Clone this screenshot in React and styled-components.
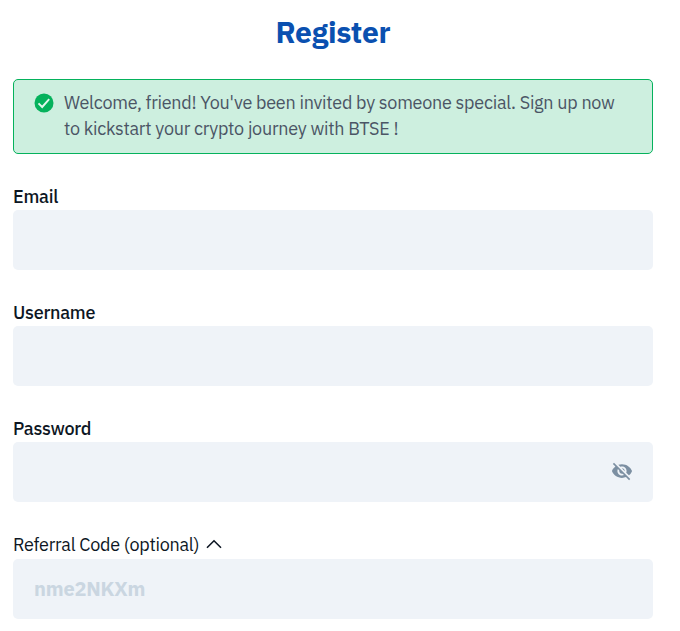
import React, { useState } from "react";
import styled, { createGlobalStyle } from "styled-components";
import { MdVisibilityOff, MdVisibility } from "react-icons/md";

const GlobalStyle = createGlobalStyle`
  * {
    box-sizing: border-box;
  }
  body {
    margin: 0;
    background-color: #fff;
    color: #0d1623;
    font-family: "IBM Plex Sans", Roboto, "Liberation Sans", sans-serif;
    font-size: 18px;
    line-height: 26px;
    letter-spacing: -0.265px;
  }
`;

const Page = styled.main`
  width: 680px;
  height: 631px;
  padding: 12px 27px 0 13px;
  overflow: hidden;
`;
const Title = styled.h1`
  margin: 0 0 27px;
  color: #0a50b0;
  font-size: 30px;
  font-weight: 700;
  line-height: 40px;
  text-align: center;
`;
const Notice = styled.div`
  display: flex;
  gap: 10px;
  height: 75px;
  padding: 10px 20px;
  border: 1px solid #05b25c;
  border-radius: 5px;
  background-color: #cdefdf;
  color: #4b5565;

  svg {
    flex: none;
    margin-top: 3px;
  }
  p {
    margin: 0;
  }
`;
const Form = styled.form`
  display: flex;
  flex-direction: column;
  gap: 30px;
  margin-top: 30px;
`;
const Label = styled.label`
  display: flex;
  align-items: center;
  gap: 7px;
  height: 26px;
  margin-bottom: ${(props) => (props.$light ? "1px" : 0)};
  font-weight: ${(props) => (props.$light ? 400 : 500)};

  svg {
    margin-bottom: 2px;
  }
`;
const InputBox = styled.div`
  display: flex;
  align-items: center;
  height: 60px;
  padding: 0 20px 0 21px;
  border-radius: 5px;
  background-color: #eff3f8;
`;
const Input = styled.input`
  flex: 1;
  min-width: 0;
  height: 100%;
  padding: 0 0 1px;
  border: none;
  outline: none;
  background: none;
  color: #0d1623;
  font: inherit;
  font-size: 20px;
  font-weight: 700;
  letter-spacing: -0.2px;
  &::placeholder {
    color: #cad6e1;
    opacity: 1;
  }
`;
const EyeButton = styled.button`
  display: flex;
  padding: 0 0 2px;
  border: none;
  background: none;
  color: #7c8fa2;
`;

const Check = () => (
  <svg width="20" height="20" viewBox="0 0 20 20" fill="none">
    <circle cx="10" cy="10" r="9.5" fill="#05b25c" />
    <path d="M4.5 10.3l3.7 3.7 7-7.8" stroke="#e3f7ed" strokeWidth="1.9" />
  </svg>
);

const Chevron = () => (
  <svg width="16" height="10" viewBox="0 0 16 10" fill="none">
    <path d="M1 8.8l7-7 7 7" stroke="#0d1623" strokeWidth="1.6" />
  </svg>
);

const Field = ({ id, label, type = "text", light, icon, placeholder, children }) => (
  <div>
    <Label htmlFor={id} $light={light}>
      {label}
      {icon}
    </Label>
    <InputBox>
      <Input id={id} type={type} placeholder={placeholder} />
      {children}
    </InputBox>
  </div>
);

const App = () => {
  const [visible, setVisible] = useState(false);

  return (
    <Page>
      <GlobalStyle />
      <Title>Register</Title>
      <Notice>
        <Check />
        <p>
          Welcome, friend! You've been invited by someone special. Sign up now
          to kickstart your crypto journey with BTSE !
        </p>
      </Notice>
      <Form>
        <Field id="email" label="Email" />
        <Field id="username" label="Username" />
        <Field
          id="password"
          label="Password"
          type={visible ? "text" : "password"}
        >
          <EyeButton
            type="button"
            onClick={() => setVisible(!visible)}
            aria-label="Toggle password"
          >
            {visible ? <MdVisibility size={22} /> : <MdVisibilityOff size={22} />}
          </EyeButton>
        </Field>
        <Field
          id="referral"
          label="Referral Code (optional)"
          light
          icon={<Chevron />}
          placeholder="nme2NKXm"
        />
      </Form>
    </Page>
  );
};

export default App;
